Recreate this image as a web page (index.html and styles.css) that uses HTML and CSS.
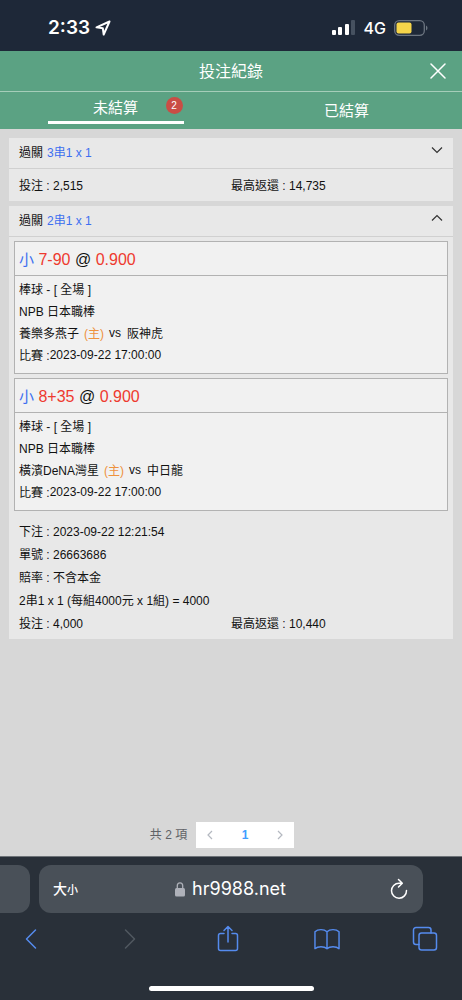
FILE: index.html
```html
<!DOCTYPE html>
<html lang="zh-Hant">
<head>
<meta charset="utf-8">
<meta name="viewport" content="width=device-width, initial-scale=1">
<title>投注紀錄</title>
<link rel="stylesheet" href="styles.css">
</head>
<body>
<div class="status">
  <div class="status-time">2:33
    <svg width="16" height="16" viewBox="0 0 16 16" fill="none" stroke="#fff" stroke-width="2" stroke-linejoin="round"><path d="M14.500 1.500 1.500 7.300 7.800 8.200 8.700 14.500Z"/></svg>
  </div>
  <div class="status-right">
    <svg width="24" height="16" viewBox="0 0 24 16" fill="#fff"><rect x="0" y="10" width="4" height="5" rx="1"/><rect x="6" y="7" width="4" height="8" rx="1"/><rect x="13" y="4" width="4" height="11" rx="1"/><rect x="19" y="0" width="4" height="15" rx="1" fill="#465160"/></svg>
    <span>4G</span>
    <svg width="34" height="16" viewBox="0 0 34 16"><rect x=".7" y=".7" width="29.600" height="14.600" rx="4.500" fill="none" stroke="#6c7580" stroke-width="1.300"/><rect x="2.500" y="2.500" width="15" height="11" rx="2" fill="#f6d54a"/><path d="M32 5.500c2 1 2 4 0 5z" fill="#6c7580"/></svg>
  </div>
</div>
<header class="header">
  <h1>投注紀錄</h1>
  <button class="close" aria-label="關閉"><svg width="16" height="16" viewBox="0 0 16 16" stroke="#fff" stroke-width="1.500" stroke-linecap="round"><path d="M1 1 15 15M15 1 1 15"/></svg></button>
</header>
<nav class="tabs">
  <button class="tab tab-active"><span class="tab-label">未結算<span class="badge">2</span></span></button>
  <button class="tab"><span class="tab-label">已結算</span></button>
</nav>
<main class="content">
  <section class="card">
    <button class="card-head"><span class="parlay"><span>過關</span><span class="blue">3串1 x 1</span></span>
      <svg width="12" height="12" viewBox="0 0 12 12" fill="none" stroke="#333" stroke-width="1.200"><path d="M1 3.500 6 8.500 11 3.500"/></svg></button>
    <div class="sums"><span>投注 : 2,515</span><span>最高返還 : 14,735</span></div>
  </section>
  <section class="card">
    <button class="card-head"><span class="parlay"><span>過關</span><span class="blue">2串1 x 1</span></span>
      <svg width="12" height="12" viewBox="0 0 12 12" fill="none" stroke="#333" stroke-width="1.200"><path d="M1 8.500 6 3.500 11 8.500"/></svg></button>
    <div class="bets">
      <article class="bet">
        <h2><span class="side">小</span> <span class="red">7-90</span> @ <span class="red">0.900</span></h2>
        <div class="bet-body">
          <p>棒球 - [ 全場 ]</p>
          <p>NPB 日本職棒</p>
          <p class="match"><span>養樂多燕子</span><span class="home">(主)</span><span class="vs">vs</span><span>阪神虎</span></p>
          <p class="when"><span>比賽 :</span><time>2023-09-22 17:00:00</time></p>
        </div>
      </article>
      <article class="bet">
        <h2><span class="side">小</span> <span class="red">8+35</span> @ <span class="red">0.900</span></h2>
        <div class="bet-body">
          <p>棒球 - [ 全場 ]</p>
          <p>NPB 日本職棒</p>
          <p class="match"><span>橫濱DeNA灣星</span><span class="home">(主)</span><span class="vs">vs</span><span>中日龍</span></p>
          <p class="when"><span>比賽 :</span><time>2023-09-22 17:00:00</time></p>
        </div>
      </article>
    </div>
    <div class="details">
      <p>下注 : 2023-09-22 12:21:54</p>
      <p>單號 : 26663686</p>
      <p>賠率 : 不含本金</p>
      <p>2串1 x 1 (每組4000元 x 1組) = 4000</p>
      <p class="pair"><span>投注 : 4,000</span><span>最高返還 : 10,440</span></p>
    </div>
  </section>
  <div class="pager">
    <span>共 2 項</span>
    <div class="pages">
      <button aria-label="上一頁"><svg width="8" height="10" viewBox="0 0 8 10" fill="none" stroke="#b4b8c0" stroke-width="1.200"><path d="M6 1 2 5 6 9"/></svg></button>
      <button class="current">1</button>
      <button aria-label="下一頁"><svg width="8" height="10" viewBox="0 0 8 10" fill="none" stroke="#b4b8c0" stroke-width="1.200"><path d="M2 1 6 5 2 9"/></svg></button>
    </div>
  </div>
</main>
<footer class="browser">
  <div class="address-row">
    <div class="prev-page"></div>
    <div class="address">
      <button class="text-size" aria-label="文字大小"><span>大</span><small>小</small></button>
      <div class="url"><svg width="10" height="15" viewBox="0 0 10 15"><path d="M2.300 7V3.800a2.700 3 0 0 1 5.400 0V7" fill="none" stroke="#aeb1b9" stroke-width="1.300"/><rect y="6" width="10" height="8.500" rx="1.500" fill="#aeb1b9"/></svg>hr9988.net</div>
      <button class="reload" aria-label="重新載入"><svg width="18" height="22" viewBox="0 0 18 22" fill="none" stroke="#fff" stroke-width="1.500" stroke-linecap="round" stroke-linejoin="round"><path d="M12 5.200H9A7.500 7.500 0 1 0 16.500 12.500M8.500 1.500 12.300 5.200 8.500 9"/></svg></button>
    </div>
  </div>
  <div class="tools">
    <button aria-label="返回"><svg width="12" height="28" viewBox="0 0 12 28" stroke="#558bee"><path d="M10.500 5 1.500 14 10.500 23"/></svg></button>
    <button aria-label="前進"><svg width="12" height="28" viewBox="0 0 12 28" stroke="#515860"><path d="M1.500 5 10.500 14 1.500 23"/></svg></button>
    <button aria-label="分享"><svg width="22" height="28" viewBox="0 0 22 28" stroke="#558bee"><path d="M7 8.500H3.500a2 2 0 0 0-2 2v13a2 2 0 0 0 2 2h15a2 2 0 0 0 2-2v-13a2 2 0 0 0-2-2H15M11 17V1.500M7 5.500 11 1.500 15 5.500"/></svg></button>
    <button aria-label="書籤"><svg width="26" height="28" viewBox="0 0 27 28" stroke="#558bee"><path d="M13.500 6.500C10.500 3.500 4 3.500 1 6.500V24C4 21.500 10.500 21.500 13.500 24C16.500 21.500 23 21.500 26 24V6.500C23 3.500 16.500 3.500 13.500 6.500ZM13.500 6.500V24"/></svg></button>
    <button aria-label="標籤頁"><svg width="26" height="28" viewBox="0 0 26 28" stroke="#558bee"><path d="M7 19.500H4a2.500 2.500 0 0 1-2.500-2.500V5A2.500 2.500 0 0 1 4 2.500H16.500A2.500 2.500 0 0 1 19 5V8"/><rect x="7" y="8" width="17.500" height="17" rx="2.500"/></svg></button>
  </div>
  <div class="home-bar"></div>
</footer>
</body>
</html>
```

FILE: styles.css
```css
* { box-sizing: border-box; }
body {
  margin: 0;
  min-height: 100vh;
  display: flex;
  flex-direction: column;
  background: #d7d7d7;
  color: #111;
  font: 12px/22px "Liberation Sans", "Noto Sans CJK TC", sans-serif;
}
h1, h2, p { margin: 0; font-weight: 400; }
button {
  border: 0;
  padding: 0;
  background: none;
  color: inherit;
  font: inherit;
  cursor: pointer;
}
svg { display: block; flex: none; }

.status {
  height: 51px;
  padding: 4px 34px 0 48px;
  display: flex;
  align-items: center;
  justify-content: space-between;
  background: #1e2838;
  color: #fff;
  font-family: Inter, sans-serif;
}
.status-time { display: flex; align-items: center; gap: 5px; font-size: 19px; font-weight: 600; }
.status-right { display: flex; align-items: center; gap: 8px; font-size: 16px; font-weight: 500; }

.header {
  position: relative;
  height: 41px;
  padding-top: 2px;
  display: flex;
  align-items: center;
  justify-content: center;
  background: #5ba283;
  border-bottom: 1px solid #a5cdb9;
  color: #fff;
}
.header h1 { font-size: 16px; line-height: 24px; }
.close { position: absolute; right: 16px; top: 12px; }
.tabs {
  height: 37px;
  display: grid;
  grid-template-columns: 1fr 1fr;
  background: #5ba283;
  color: #fff;
  font-size: 15px;
}
.tab { display: flex; align-items: center; justify-content: center; }
.tab-label { display: block; width: 136px; }
.tab-active { align-items: flex-start; }
.tab-active .tab-label { position: relative; height: 32px; padding-top: 5px; border-bottom: 3px solid #fff; }
.badge {
  position: absolute;
  right: 1px;
  top: 5px;
  width: 17px;
  height: 17px;
  border-radius: 50%;
  background: #c94d45;
  font-size: 10px;
  line-height: 17px;
}

.content { flex: 1; display: flex; flex-direction: column; gap: 5px; padding: 9px 9px 8px; }
.card { background: #e8e8e8; }
.card-head {
  width: 100%;
  height: 31px;
  padding: 0 10px;
  display: flex;
  align-items: center;
  justify-content: space-between;
  border-bottom: 1px solid #d0d0d0;
}
.card-head svg { margin-bottom: 7px; }
.parlay { display: flex; gap: 4px; }
.blue { color: #3d6ff0; }
.red { color: #ee3a2f; }
.sums, .pair { display: grid; grid-template-columns: 1fr 1fr; }
.sums { height: 32px; align-items: center; padding: 2px 10px 0; }
.bets { display: grid; gap: 4px; padding: 4px 5px 0; }
.bet { border: 1px solid #b2b2b2; background: #f1f1f1; }
.bet h2 {
  height: 34px;
  padding-left: 4px;
  border-bottom: 1px solid #b2b2b2;
  font-size: 16px;
  line-height: 35px;
}
.side { color: #3d6ff0; font-size: 15px; }
.bet-body { padding: 3px 4px 6px; }
.match, .when { display: flex; }
.home { margin-left: 5px; color: #ee923d; }
.vs { margin: 0 6px 0 5px; line-height: 20px; }
.when time { line-height: 20px; }
.details { padding: 10px 10px 3px; line-height: 23px; }

.pager {
  margin-top: auto;
  padding-right: 18px;
  display: flex;
  align-items: center;
  justify-content: center;
  gap: 9px;
  color: #606266;
}
.pages { display: grid; grid-template-columns: 28px 42px 28px; height: 26px; background: #fff; }
.pages button { display: grid; place-items: center; }
.pages .current { color: #409eff; font-weight: 700; }

.browser { height: 144px; background: #293039; border-top: 1px solid #6e7378; color: #fff; }
.address-row { display: flex; gap: 9px; padding-top: 8px; }
.prev-page { width: 30px; height: 48px; border-radius: 0 12px 12px 0; background: #495058; }
.address {
  flex: 1;
  height: 48px;
  margin-right: 39px;
  padding: 0 15px 0 14px;
  display: grid;
  grid-template-columns: 1fr auto 1fr;
  align-items: center;
  border-radius: 12px;
  background: #495058;
}
.text-size { justify-self: start; font-size: 14px; font-weight: 500; }
.text-size small { font-size: 11px; }
.url { display: flex; align-items: center; gap: 7px; font: 18px/24px Inter, sans-serif; }
.reload { justify-self: end; }
.tools { display: flex; justify-content: space-between; padding: 12px 24px 0 18px; }
.tools button { width: 26px; display: grid; place-items: center; }
.tools svg { fill: none; stroke-width: 1.5px; stroke-linecap: round; stroke-linejoin: round; }
.home-bar { width: 165px; height: 5px; margin: 33px auto 0; border-radius: 3px; background: #fff; }
```
